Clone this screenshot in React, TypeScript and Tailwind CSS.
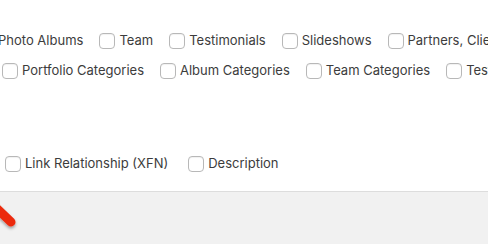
const rowOne = ["Photo Albums", "Team", "Testimonials", "Slideshows", "Partners, Clients"];
const rowTwo = ["Portfolio Categories", "Album Categories", "Team Categories", "Testimonial Categories"];
const rowThree = ["Link Relationship (XFN)", "Description"];

const Option = ({ label }: { label: string }) => (
  <label className="flex shrink-0 items-center gap-[4px] whitespace-nowrap">
    <span className="block h-[16px] w-[16px] shrink-0 rounded-[4px] border border-[#b8b8b8] bg-white shadow-[inset_0_1px_1px_rgba(0,0,0,0.06)]" />
    <span>{label}</span>
  </label>
);

export default function App() {
  return (
    <div className="relative h-[244px] w-[488px] overflow-hidden bg-[#f1f1f1] font-['Inter','Liberation_Sans',Arial,sans-serif] text-[13px] text-[#3c3c3c]">
      {/* Screen options panel */}
      <div className="h-[192px] border-b border-[#dddddd] bg-white">
        <div className="flex h-[20px] translate-y-[31px] items-center gap-[16px] -ml-[22px]">
          {rowOne.map((l) => (
            <Option key={l} label={l} />
          ))}
        </div>
        <div className="flex h-[20px] translate-y-[41px] items-center gap-[16px] pl-[2px]">
          {rowTwo.map((l) => (
            <Option key={l} label={l} />
          ))}
        </div>
        <div className="flex h-[20px] translate-y-[114px] items-center gap-[20px] pl-[5px]">
          {rowThree.map((l) => (
            <Option key={l} label={l} />
          ))}
        </div>
      </div>

      {/* Annotation arrow */}
      <svg className="absolute left-0 top-[190px]" width="40" height="50" viewBox="0 0 40 50">
        <defs>
          <filter id="sh" x="-50%" y="-50%" width="200%" height="200%">
            <feDropShadow dx="0" dy="2" stdDeviation="1.5" floodColor="#000" floodOpacity="0.35" />
          </filter>
        </defs>
        <line x1="-12" y1="10" x2="11" y2="32" stroke="#ec2a10" strokeWidth="9" strokeLinecap="round" filter="url(#sh)" />
      </svg>
    </div>
  );
}
